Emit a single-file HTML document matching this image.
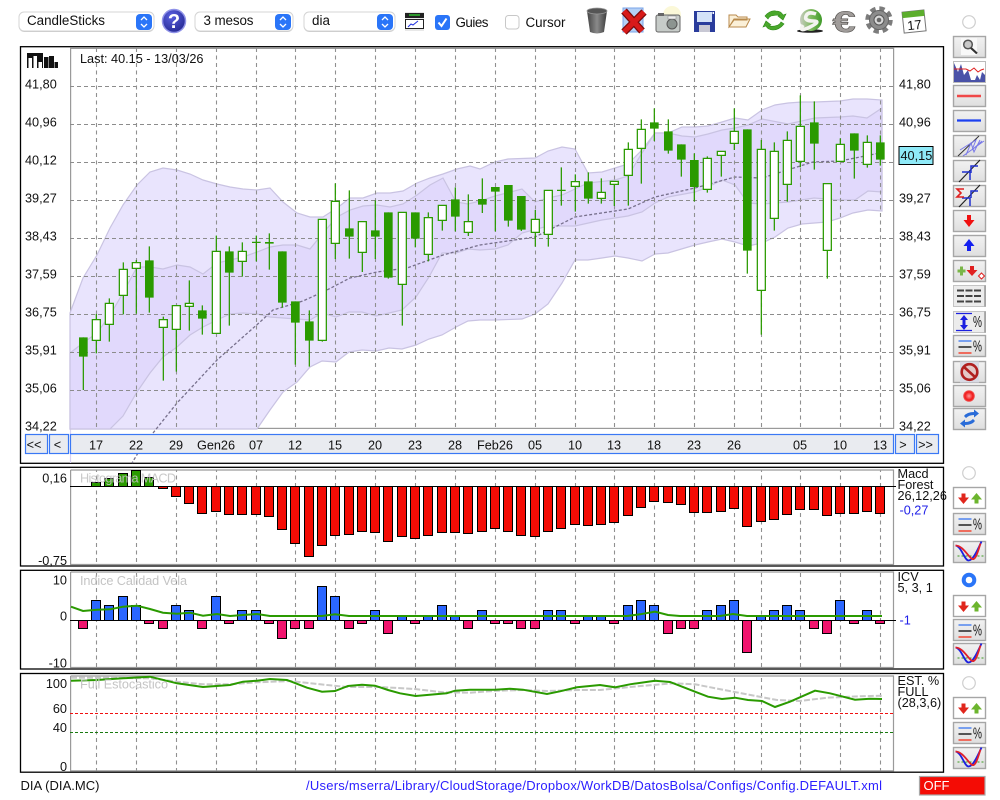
<!DOCTYPE html>
<html><head><meta charset="utf-8"><title>CandleSticks</title>
<style>
html,body{margin:0;padding:0;background:#fff;width:1000px;height:800px;overflow:hidden}
svg{display:block;filter:blur(.3px)}
text{font-family:"Liberation Sans",sans-serif;font-size:12.7px;fill:#111}
.wm{fill:#c4c4c4;font-size:12.7px}
.fr{fill:none;stroke:#000;stroke-width:1.3}
.in{fill:#fff;stroke:#9a9a9a;stroke-width:1.2}
.b{fill:url(#bg);stroke:#a6a6a6;stroke-width:1.4}
.sel{fill:#fff;stroke:#d4d4d4;stroke-width:1}
.sh{fill:#c8c8c8}
.st{fill:#2a75f8}
.nb{fill:#e9ebf0;stroke:#3a78f5;stroke-width:1.2}
</style></head><body>
<svg width="1000" height="800" viewBox="0 0 1000 800" xmlns="http://www.w3.org/2000/svg">
<defs>
<linearGradient id="bg" x1="0" y1="0" x2="0" y2="1"><stop offset="0" stop-color="#f2f2f2"/><stop offset="1" stop-color="#dedede"/></linearGradient>
<linearGradient id="tr" x1="0" y1="0" x2="1" y2="0"><stop offset="0" stop-color="#444"/><stop offset=".5" stop-color="#8a8a8a"/><stop offset="1" stop-color="#3c3c3c"/></linearGradient>
<radialGradient id="hp" cx=".4" cy=".3" r=".8"><stop offset="0" stop-color="#5a60e0"/><stop offset="1" stop-color="#20248c"/></radialGradient>
<radialGradient id="rd" cx=".5" cy=".5" r=".5"><stop offset="0" stop-color="#ff9a9a"/><stop offset=".7" stop-color="#f01818"/><stop offset="1" stop-color="#f06060"/></radialGradient>
<linearGradient id="cn" x1="0" y1="0" x2="1" y2="0"><stop offset="0" stop-color="#c8ccc0"/><stop offset=".55" stop-color="#7ab85a"/><stop offset="1" stop-color="#3f9a28"/></linearGradient>
<clipPath id="pn"><rect x="70" y="48" width="824" height="381"/><rect x="70" y="470" width="824" height="95"/><rect x="70" y="572" width="824" height="95"/><rect x="70" y="676" width="824" height="95"/></clipPath>
<g id="rg"><path d="M8 6h4v4h3.500l-5.500 6.500-5.500-6.500h3.500z" fill="#e0261c"/><path d="M21 16h4v-4h3.500l-5.500-6.500-5.500 6.500h3.500z" fill="#6cb52e"/></g>
<g id="pct"><path d="M5 5.500h13" stroke="#2a6cf0" stroke-width="1.200"/><path d="M5 11.500h13" stroke="#222" stroke-width="1.500"/><path d="M5 17.500h13" stroke="#f0604f" stroke-width="1.800"/><text transform="translate(19.500 16) scale(.72 1.1)" style="font-size:14px">%</text></g>
<g id="crv"><path d="M4 14.500h26" stroke="#3a9a20" stroke-width="1" stroke-dasharray="2 2" fill="none"/><path d="M2 4C8 5 11 19 15 19S23 11 28 0" stroke="#1c20e0" stroke-width="1.800" fill="none"/><path d="M2 4C9 4 14 14 18 17S24 11 27 2" stroke="#e0202a" stroke-width="1.800" fill="none"/></g>
</defs>

<!-- toolbar -->
<rect class="sh" x="19" y="13" width="135" height="19" rx="5"/><rect class="sel" x="19" y="12" width="135" height="19" rx="5"/><rect class="st" x="136" y="14" width="16" height="16" rx="4"/>
<path d="M141 20l3-3 3 3M141 24l3 3 3-3" stroke="#fff" stroke-width="1.300" fill="none"/>
<text x="27" y="25" style="font-size:13.400px" textLength="78">CandleSticks</text>
<circle cx="174" cy="21" r="11.500" fill="url(#hp)" stroke="#8f92e8" stroke-width="1.500"/>
<text x="174" y="28" text-anchor="middle" style="font-size:20px;font-weight:bold;fill:#fff">?</text>
<rect class="sh" x="195" y="13" width="98" height="19" rx="5"/><rect class="sel" x="195" y="12" width="98" height="19" rx="5"/><rect class="st" x="275" y="14" width="16" height="16" rx="4"/>
<path d="M280 20l3-3 3 3M280 24l3 3 3-3" stroke="#fff" stroke-width="1.300" fill="none"/>
<text x="203.500" y="25" style="font-size:13.400px" textLength="50">3 mesos</text>
<rect class="sh" x="304" y="13" width="91" height="19" rx="5"/><rect class="sel" x="304" y="12" width="91" height="19" rx="5"/><rect class="st" x="377" y="14" width="16" height="16" rx="4"/>
<path d="M382 20l3-3 3 3M382 24l3 3 3-3" stroke="#fff" stroke-width="1.300" fill="none"/>
<text x="312" y="25" style="font-size:13.400px" textLength="18">dia</text>
<rect x="405" y="12" width="19" height="19" fill="#e8e8e8"/><rect x="405" y="13" width="19" height="5" fill="#222"/><path d="M409 15h11" stroke="#30c030" stroke-width="1.500"/>
<rect x="405.500" y="19.500" width="18" height="9" fill="#fff" stroke="#222"/><path d="M408 27l3-3 2 1 5-4" stroke="#2030e0" fill="none"/>
<rect x="435" y="15" width="15" height="15" rx="3" fill="#2a75f8"/><path d="M438.500 22.500l3 3.500 5-7.500" stroke="#fff" stroke-width="2" fill="none"/>
<text x="455.500" y="27" style="font-size:13.400px" textLength="33">Guies</text>
<rect x="505.500" y="15.500" width="13.500" height="13.500" rx="3" fill="#fff" stroke="#c8c8c8"/>
<text x="525.500" y="27" style="font-size:13.400px" textLength="40">Cursor</text>

<!-- trash -->
<path d="M587 11L607 11 604 32Q597 35 590 32z" fill="url(#tr)"/><ellipse cx="597" cy="11" rx="10" ry="3" fill="#555" stroke="#999" stroke-width=".8"/>
<!-- X -->
<rect x="623" y="8" width="20" height="24" fill="#b4d0f6" stroke="#7aa4e8"/>
<path d="M624 11l18 20M644 12l-20 20" stroke="#7a0a0a" stroke-width="7.500" fill="none"/><path d="M624 11l18 20M644 12l-20 20" stroke="#d81a1a" stroke-width="5" fill="none"/>
<!-- camera -->
<circle cx="672" cy="15" r="9" fill="#fbf8d8"/><rect x="656" y="15" width="24" height="17" rx="2" fill="#c6cbc8" stroke="#666"/><rect x="658" y="13" width="6" height="3" fill="#666"/><circle cx="672" cy="24" r="5" fill="#8c9490" stroke="#555"/><rect x="668" y="16" width="8" height="3" fill="#eee" stroke="#888" stroke-width=".5"/>
<!-- floppy -->
<rect x="694" y="11" width="21" height="21" fill="#2a3c9c"/><rect x="697" y="12" width="15" height="10" fill="#d4e2f8"/><rect x="699" y="25" width="11" height="7" fill="#c8c8d4"/><rect x="712.500" y="12" width="1.500" height="2" fill="#fff"/>
<!-- folder -->
<path d="M729 27V15h7l2 2h9v3H734l-5 7zM729 27h17l4-8h-16z" fill="#fbf0d8" stroke="#b88a4c" stroke-width="1"/>
<!-- refresh -->
<path d="M765 16Q770 10 776 11 781 11 783 15l3-1-3 6-5-4 2-1Q776 15 771 16 769 17 768 19z" fill="#4aa82c" stroke="#2e8a18" stroke-width=".6"/>
<path d="M784 24Q779 30 773 30 768 30 766 26l-3 1 3-6 5 4-2 1Q773 27 778 25 780 24 781 22z" fill="#4aa82c" stroke="#2e8a18" stroke-width=".6"/>
<!-- coin -->
<ellipse cx="810" cy="31" rx="13" ry="1.800" fill="#222"/><circle cx="811" cy="20" r="11" fill="url(#cn)"/>
<path d="M816 14Q808 11 806 16T813 21 810 27 803 25" fill="none" stroke="#f4f4f0" stroke-width="3.600"/>
<!-- euro -->
<text transform="translate(844 32) scale(1.400 1)" text-anchor="middle" style="font-size:30px;font-weight:bold;fill:#a09c9a;stroke:#55524f;stroke-width:.6">€</text>
<!-- gear -->
<circle cx="879" cy="20" r="11" fill="none" stroke="#7c7c7c" stroke-width="5.500" stroke-dasharray="5 3.640"/><circle cx="879" cy="20" r="9.500" fill="#8c8c8c" stroke="#666"/><circle cx="879" cy="20" r="5" fill="#d8d8d8" stroke="#555"/><circle cx="879" cy="20" r="2.300" fill="#666"/>
<!-- calendar -->
<g transform="rotate(-6 914 21)"><rect x="903" y="11" width="22" height="21" fill="#fff" stroke="#777"/><rect x="903" y="11" width="22" height="6" fill="#5cae2c"/><text x="914" y="29.500" text-anchor="middle" style="font-size:13px">17</text></g>

<circle cx="969" cy="22" r="6.300" fill="#fff" stroke="#cfcfcf" stroke-width="1.200"/>

<!-- main panel -->
<rect class="fr" x="20.500" y="46.700" width="923" height="416.600"/>
<rect class="in" x="70.600" y="48.400" width="823" height="380"/>
<path d="M70.500 429V463" stroke="#d8d2f2" stroke-width="1.200"/>
<path d="M70 313L83 278 97 255 110 228 123 205 137 185 150 172 163 168 177 170 190 174 203 180 217 184 230 187 243 189 257 190 270 188 283 202 297 213 310 217 323 217 337 208 350 198 363 198 377 193 390 193 403 191 417 183 430 178 443 174 457 169 470 166 480 169 495 162 508 159 535 158 548 151 562 147 575 149 588 173 602 172 615 168 628 164 642 150 655 133 668 133 682 127 695 127 708 126 722 122 735 118 748 120 762 110 775 105 788 103 802 102 815 102 840 101 853 99 867 99 882 100V211L868 210 853 213 840 218 827 222 802 224 788 228 775 237 762 243 748 246 735 242 722 239 708 242 695 245 668 253 655 254 642 261 628 258 615 256 602 258 588 260 575 260 562 283 548 304 535 314 522 319 495 320 480 320 468 321 456 327 442 335 429 339 416 345 402 349 389 348 376 351 362 350 349 352 336 362 322 361 310 367 297 382 283 392 270 410 257 429H70z" fill="#e9e4fd" stroke="#c9c3e2" stroke-width="1.200"/>
<path d="M70 353L83 343 97 333 110 315 123 293 137 267 150 267 163 269 177 265 190 267 203 274 217 263 230 260 243 257 257 252 270 247 283 245 297 245 310 249 323 233 337 217 350 210 363 206 377 205 390 207 403 204 417 195 430 185 443 178 456 202 468 204 480 201 495 196 522 189 535 202 548 198 562 195 575 189 588 183 615 180 628 176 642 153 655 133 668 133 682 136 695 137 708 134 722 130 735 128 748 125 762 119 788 124 815 118 840 117 853 116 867 118 882 108V192L868 191 855 200 840 200 814 198 788 202 775 203 762 204 748 203 735 185 722 180 708 187 695 192 668 197 655 203 642 212 628 216 602 220 575 226 562 226 548 226 522 233 508 245 495 249 480 250 468 249 456 253 442 253 429 277 416 297 402 310 389 313 376 316 362 312 349 312 336 317 322 313 310 320 297 319 283 318 270 317 257 314 243 313 230 314 217 320 203 327 190 335 177 347 163 357 150 373 137 392 123 416 110 429H70z" fill="#e1d9fc" stroke="#c9c3e2" stroke-width="1.200"/>
<path d="M70 86.500H896M70 124.500H896M70 162.500H896M70 200.500H896M70 238.500H896M70 276.500H896M70 314.500H896M70 352.500H896M70 390.500H896" stroke="#8c8c8c" stroke-width="1.100" stroke-dasharray="4 3" fill="none"/>
<path d="M153 433L177 403 217 360 260 322 273 310 303 301 327 290 350 278 377 272 407 268 443 255 480 245 535 237 575 217 628 209 655 197 695 188 735 177 762 178 813 162 840 161 880 153M138 453L132 463" fill="none" stroke="#77708c" stroke-width="1.300" stroke-dasharray="3 2"/>

<!-- vertical grid -->
<path clip-path="url(#pn)" d="M96.500 48V771M136.500 48V771M176.500 48V771M216.500 48V771M256.500 48V771M295.500 48V771M335.500 48V771M375.500 48V771M415.500 48V771M455.500 48V771M495.500 48V771M535.500 48V771M575.500 48V771M614.500 48V771M654.500 48V771M694.500 48V771M734.500 48V771M761.500 48V771M800.500 48V771M840.500 48V771M880.500 48V771" stroke="#909090" stroke-width="1.100" stroke-dasharray="4 3.500" fill="none"/>

<!-- candles A -->
<g transform="translate(60 130) scale(.33333)">
<path d="M70 622V780M109 552V670M148 505V635M190 397V553M229 390V551M268 349V548M310 560V752M349 527V725M388 451V602M427 526V614M469 317V612M508 349V587M547 337V440M589 317V394M628 310V419M667 364V533M706 514V704M748 541V710M787 268V635M826 160V387M868 181V386M907 275V426M946 211V387M985 247V446M1027 247V587M1066 247V352M1105 247V394M1147 226V302M1186 172V304M1225 193V318M576 337h26" stroke="#2a9a00" stroke-width="3.800" fill="none"/>
<path d="M57 622h26v58h-26zM255 391h26v112h-26zM414 541h26v25h-26zM495 364h26v64h-26zM615 336h26v5h-26zM654 364h26v154h-26zM693 514h26v64h-26zM735 574h26v58h-26zM855 295h26v25h-26zM933 301h26v19h-26zM972 247h26v196h-26zM1053 247h26v79h-26zM1173 208h26v52h-26z" fill="#2a9a00"/>
<path d="M97 569h24v62h-24zM136 520h24v63h-24zM178 418h24v78h-24zM217 398h24v17h-24zM298 569h24v23h-24zM337 527h24v71h-24zM376 520h24v9h-24zM457 364h24v246h-24zM535 364h24v30h-24zM775 268h24v363h-24zM814 214h24v126h-24zM895 275h24v92h-24zM1015 247h24v216h-24zM1093 263h24v110h-24zM1135 226h24v45h-24zM1213 275h24v32h-24z" fill="#fff" stroke="#2a9a00" stroke-width="3.800"/>
</g>
<!-- candles B -->
<g transform="translate(480 90) scale(.33333)">
<path d="M7 265V369M46 291V424M85 285V410M124 318V423M166 360V470M205 301V470M244 232V347M286 253V365M325 247V341M364 265V341M403 274V348M445 157V347M484 88V281M523 55V153M565 88V191M604 163V260M643 190V334M682 199V308M724 184V260M763 55V180M802 118V551M844 150V734M883 157V422M922 124V335M961 16V232M1003 34V239M1042 281V566M1081 145V215M1123 130V266M1162 136V233M1201 136V227M231 301h26" stroke="#2a9a00" stroke-width="3.800" fill="none"/>
<path d="M-6 327h26v17h-26zM33 291h26v14h-26zM72 285h26v107h-26zM111 318h26v101h-26zM312 274h26v52h-26zM510 97h26v19h-26zM552 124h26v58h-26zM591 163h26v46h-26zM630 210h26v81h-26zM789 118h26v364h-26zM990 97h26v64h-26zM1110 130h26v52h-26zM1188 157h26v52h-26z" fill="#2a9a00"/>
<path d="M154 388h24v39h-24zM193 301h24v132h-24zM274 275h24v14h-24zM352 307h24v18h-24zM391 274h24v9h-24zM433 178h24v78h-24zM472 118h24v57h-24zM670 205h24v93h-24zM712 184h24v12h-24zM751 124h24v36h-24zM832 178h24v423h-24zM871 184h24v201h-24zM910 151h24v132h-24zM949 109h24v105h-24zM1030 281h24v200h-24zM1069 163h24v51h-24zM1150 157h24v66h-24z" fill="#fff" stroke="#2a9a00" stroke-width="3.800"/>
</g>

<!-- chart logo -->
<rect x="27" y="53" width="16" height="15" fill="#111"/><path d="M28.500 58h3.500v10h-3.500zM33.500 56h3.500v12h-3.500zM38.500 62h3.500v6h-3.500z" fill="#fff"/><path d="M44 57h4.500v11h-4.500zM49 56h5v12h-5zM54.500 62h3.500v6h-3.500z" fill="#111"/>
<text x="80" y="63">Last: 40.15 - 13/03/26</text>
<g>
<text x="25" y="88.500">41,80</text><text x="25" y="126.500">40,96</text><text x="25" y="164.500">40,12</text><text x="25" y="202.500">39,27</text><text x="25" y="240.500">38,43</text><text x="25" y="278.500">37,59</text><text x="25" y="316.500">36,75</text><text x="25" y="354.500">35,91</text><text x="25" y="392.500">35,06</text><text x="25" y="430.500">34,22</text>
<text x="899" y="88.500">41,80</text><text x="899" y="126.500">40,96</text><text x="899" y="202.500">39,27</text><text x="899" y="240.500">38,43</text><text x="899" y="278.500">37,59</text><text x="899" y="316.500">36,75</text><text x="899" y="354.500">35,91</text><text x="899" y="392.500">35,06</text><text x="899" y="430.500">34,22</text>
</g>
<rect x="899" y="146.500" width="34" height="18" fill="#8feaf8" stroke="#000"/>
<text x="900.500" y="160">40,15</text>

<!-- nav -->
<rect class="nb" x="25.500" y="434.500" width="22" height="19"/><text x="34" y="449" text-anchor="middle">&lt;&lt;</text>
<rect class="nb" x="49.500" y="434.500" width="19" height="19"/><text x="57.500" y="449" text-anchor="middle">&lt;</text>
<rect class="nb" x="70.500" y="434.500" width="823" height="19"/>
<rect class="nb" x="895.500" y="434.500" width="19" height="19"/><text x="903" y="449" text-anchor="middle">&gt;</text>
<rect class="nb" x="916.500" y="434.500" width="22" height="19"/><text x="925.500" y="449" text-anchor="middle">&gt;&gt;</text>
<g text-anchor="middle">
<text x="96" y="449.500">17</text><text x="136" y="449.500">22</text><text x="176" y="449.500">29</text><text x="216" y="449.500">Gen26</text><text x="256" y="449.500">07</text><text x="295" y="449.500">12</text><text x="335" y="449.500">15</text><text x="375" y="449.500">20</text><text x="415" y="449.500">23</text><text x="455" y="449.500">28</text><text x="495" y="449.500">Feb26</text><text x="535" y="449.500">05</text><text x="575" y="449.500">10</text><text x="614" y="449.500">13</text><text x="654" y="449.500">18</text><text x="694" y="449.500">23</text><text x="734" y="449.500">26</text><text x="800" y="449.500">05</text><text x="840" y="449.500">10</text><text x="880" y="449.500">13</text>
</g>

<!-- MACD -->
<rect class="fr" x="20.500" y="467.300" width="923" height="98.700"/>
<path d="M70.600 470V564.500H893.500V470H70.600" fill="none" stroke="#9a9a9a" stroke-width="1.200"/>
<path d="M91.500 486.500V482.500h9v4zM104.500 486.500V478.500h9v8zM118.500 486.500V473.500h9v13zM131.500 486.500V470.500h9v16zM144.500 486.500V477.500h9v9z" fill="#2a9a00" stroke="#000"/>
<path d="M158.500 486.500h9V488.500h-9zM171.500 486.500h9V496.500h-9zM184.500 486.500h9V503.500h-9zM197.500 486.500h9V513.500h-9zM211.500 486.500h9V511.500h-9zM224.500 486.500h9V514.500h-9zM237.500 486.500h9V514.500h-9zM251.500 486.500h9V514.500h-9zM264.500 486.500h9V516.500h-9zM277.500 486.500h9V529.500h-9zM290.500 486.500h9V543.500h-9zM304.500 486.500h9V556.500h-9zM317.500 486.500h9V545.500h-9zM330.500 486.500h9V535.500h-9zM344.500 486.500h9V534.500h-9zM357.500 486.500h9V531.500h-9zM370.500 486.500h9V532.500h-9zM383.500 486.500h9V541.500h-9zM397.500 486.500h9V536.500h-9zM410.500 486.500h9V538.500h-9zM423.500 486.500h9V535.500h-9zM437.500 486.500h9V532.500h-9zM450.500 486.500h9V532.500h-9zM463.500 486.500h9V533.500h-9zM477.500 486.500h9V531.500h-9zM490.500 486.500h9V528.500h-9zM503.500 486.500h9V531.500h-9zM516.500 486.500h9V535.500h-9zM530.500 486.500h9V536.500h-9zM543.500 486.500h9V531.500h-9zM556.500 486.500h9V528.500h-9zM570.500 486.500h9V524.500h-9zM583.500 486.500h9V525.500h-9zM596.500 486.500h9V524.500h-9zM609.500 486.500h9V522.500h-9zM623.500 486.500h9V515.500h-9zM636.500 486.500h9V507.500h-9zM649.500 486.500h9V501.500h-9zM663.500 486.500h9V502.500h-9zM676.500 486.500h9V504.500h-9zM689.500 486.500h9V512.500h-9zM702.500 486.500h9V512.500h-9zM716.500 486.500h9V511.500h-9zM729.500 486.500h9V508.500h-9zM742.500 486.500h9V526.500h-9zM756.500 486.500h9V521.500h-9zM769.500 486.500h9V519.500h-9zM782.500 486.500h9V514.500h-9zM795.500 486.500h9V509.500h-9zM809.500 486.500h9V509.500h-9zM822.500 486.500h9V515.500h-9zM835.500 486.500h9V513.500h-9zM849.500 486.500h9V513.500h-9zM862.500 486.500h9V511.500h-9zM875.500 486.500h9V513.500h-9z" fill="#f40c05" stroke="#000"/>
<path d="M70 486.500H896" stroke="#000"/>
<text class="wm" x="80" y="482.500" textLength="96" opacity=".9">Histograma MACD</text>
<text x="67" y="482.500" text-anchor="end">0,16</text><text x="67" y="565" text-anchor="end">-0,75</text>
<text x="897.500" y="478">Macd</text><text x="897.500" y="489">Forest</text><text x="897.500" y="500">26,12,26</text><text x="899.500" y="514.500" style="fill:#2020e8">-0,27</text>

<!-- ICV -->
<rect class="fr" x="20.500" y="570.300" width="923" height="98.700"/>
<path d="M70.600 572V667.500H893.500V572H70.600" fill="none" stroke="#9a9a9a" stroke-width="1.200"/>
<path d="M91.500 620.500V600.500h9v20zM104.500 620.500V605.500h9v15zM118.500 620.500V596.500h9v24zM131.500 620.500V605.500h9v15zM171.500 620.500V605.500h9v15zM184.500 620.500V610.500h9v10zM211.500 620.500V596.500h9v24zM237.500 620.500V610.500h9v10zM251.500 620.500V610.500h9v10zM317.500 620.500V586.500h9v34zM330.500 620.500V596.500h9v24zM370.500 620.500V610.500h9v10zM397.500 620.500V615.500h9v5zM423.500 620.500V615.500h9v5zM437.500 620.500V605.500h9v15zM450.500 620.500V615.500h9v5zM477.500 620.500V610.500h9v10zM543.500 620.500V610.500h9v10zM556.500 620.500V610.500h9v10zM583.500 620.500V615.500h9v5zM596.500 620.500V615.500h9v5zM623.500 620.500V605.500h9v15zM636.500 620.500V600.500h9v20zM649.500 620.500V605.500h9v15zM702.500 620.500V610.500h9v10zM716.500 620.500V605.500h9v15zM729.500 620.500V600.500h9v20zM756.500 620.500V615.500h9v5zM769.500 620.500V610.500h9v10zM782.500 620.500V605.500h9v15zM795.500 620.500V610.500h9v10zM835.500 620.500V600.500h9v20zM862.500 620.500V610.500h9v10z" fill="#2b66ff" stroke="#000"/>
<path d="M78.500 620.500V628.500h9v-8zM144.500 620.500V623.500h9v-3zM158.500 620.500V628.500h9v-8zM197.500 620.500V628.500h9v-8zM224.500 620.500V623.500h9v-3zM264.500 620.500V623.500h9v-3zM277.500 620.500V638.500h9v-18zM290.500 620.500V628.500h9v-8zM304.500 620.500V628.500h9v-8zM344.500 620.500V628.500h9v-8zM357.500 620.500V623.500h9v-3zM383.500 620.500V633.500h9v-13zM410.500 620.500V623.500h9v-3zM463.500 620.500V628.500h9v-8zM490.500 620.500V623.500h9v-3zM503.500 620.500V623.500h9v-3zM516.500 620.500V628.500h9v-8zM530.500 620.500V628.500h9v-8zM570.500 620.500V623.500h9v-3zM609.500 620.500V623.500h9v-3zM663.500 620.500V633.500h9v-13zM676.500 620.500V628.500h9v-8zM689.500 620.500V628.500h9v-8zM742.500 620.500V652.500h9v-32zM809.500 620.500V628.500h9v-8zM822.500 620.500V633.500h9v-13zM849.500 620.500V623.500h9v-3zM875.500 620.500V623.500h9v-3z" fill="#f0146e" stroke="#000"/>
<path d="M70 620.500H896" stroke="#000"/>
<path d="M71 606.700L83 611 97 609.700 110 609.300 123 606.700 137 605.700 150 609 163 612.700 177 613.700 190 612.700 203 615.700 217 614 230 616 243 615 257 614 270 616H322L335 614.300 349 616H627L640 614.300 655 611.700 668 615 680 616H720L733 614 747 616H882" fill="none" stroke="#2a9a00" stroke-width="2"/>
<text class="wm" x="80" y="585" textLength="107">Indice Calidad Vela</text>
<text x="67" y="584.500" text-anchor="end">10</text><text x="67" y="620.500" text-anchor="end">0</text><text x="67" y="667.500" text-anchor="end">-10</text>
<text x="897.500" y="581">ICV</text><text x="897.500" y="592">5, 3, 1</text><text x="899.500" y="624.500" style="fill:#2020e8">-1</text>

<!-- EST -->
<rect class="fr" x="20.500" y="673.500" width="923" height="98.700"/>
<path d="M70.600 676V770.800H893.500V676H70.600" fill="none" stroke="#9a9a9a" stroke-width="1.200"/>
<path d="M70 713.500H895" stroke="#f01010" stroke-dasharray="3 2"/><path d="M70 732.500H895" stroke="#1a7a10" stroke-dasharray="3 2"/>
<path d="M71 677.700L107 677.700 150 678.300 177 681.700 203 684.300 230 684.300 257 682.300 290 681 320 684.300 347 687 380 687 415 689 443 692.300 470 692.700 497 690.700 523 690 547 691 580 690 600 690 633 686.700 673 683.300 695 684.300 733 691.700 777 700 800 701 827 697.700 860 696.300 882 695.700" fill="none" stroke="#c8c8c8" stroke-width="2" stroke-dasharray="6 2"/>
<path d="M71 680.700L97 680 123 678.300 150 676.700 177 683.300 203 687 230 685 243 681.700 257 680.700 270 679 287 680 307 687.700 322 691.700 335 691 348 686 362 684.700 375 685.700 388 690 400 693.300 415.700 696 446.700 693.300 455 690.700 470 689.700 495 689.700 510 688.700 523 689.700 547 694 560 691.300 577 687.300 600 685 615 687.300 630 684.300 655 680.700 670 682 695 691.700 708 696.700 722 699 735 697.700 748 700 762 701 775 707 790 701.700 815 690.700 830 693.300 855 699.700 870 698.700 882 699" fill="none" stroke="#2a9a00" stroke-width="2"/>
<text class="wm" x="80" y="688.500" textLength="88">Full Estocastico</text>
<text x="67" y="688" text-anchor="end">100</text><text x="67" y="713" text-anchor="end">60</text><text x="67" y="732" text-anchor="end">40</text><text x="67" y="771" text-anchor="end">0</text>
<text x="897.500" y="685">EST. %</text><text x="897.500" y="696">FULL</text><text x="897.500" y="707">(28,3,6)</text>

<!-- footer -->
<text x="20.500" y="790" style="font-size:13px" textLength="79">DIA (DIA.MC)</text>
<text x="306" y="790" style="font-size:13px;fill:#2a1eff" textLength="576">/Users/mserra/Library/CloudStorage/Dropbox/WorkDB/DatosBolsa/Configs/Config.DEFAULT.xml</text>
<rect x="919.500" y="776.500" width="65.500" height="18.500" fill="#f40c05" stroke="#a8a8a8" stroke-width="1.200"/>
<text x="923.500" y="790" style="font-size:13px;fill:#fff">OFF</text>

<!-- right buttons -->
<rect class="b" x="953.500" y="36.500" width="32" height="21"/>
<rect x="961" y="38" width="16" height="17" fill="#f8f8f8"/><circle cx="968" cy="44.500" r="4.300" fill="#c8c8c8" stroke="#555" stroke-width="1.500"/><path d="M971 48l6 5.500" stroke="#333" stroke-width="2.200"/>

<rect x="953.500" y="61.500" width="32" height="21" fill="#fff" stroke="#bbb"/>
<path d="M954 82V63L958 72 961 64 964 75 968 70 971 80 975 80 977 75 980 80 982 72 985 75V82z" fill="#4a52a8"/>
<path d="M954 69H966L970 71 974 68 978 72 981 70 984 69" fill="none" stroke="#e02020"/>

<rect class="b" x="953.500" y="85.500" width="32" height="21"/><path d="M957 96H981" stroke="#f04848" stroke-width="2.500"/>
<rect class="b" x="953.500" y="110.500" width="32" height="21"/><path d="M957 120.500H981" stroke="#1c40f0" stroke-width="2.200"/>

<rect class="b" x="953.500" y="135.500" width="32" height="21"/>
<path d="M958 156L979 136" stroke="#333" stroke-width="1"/><path d="M963 156L984 141M960 150L976 140 972 150 982 141M966 155L971 143 974 152 980 140" stroke="#7a7ae8" fill="none"/>

<rect class="b" x="953.500" y="160.500" width="32" height="21"/>
<path d="M959 182L980 160" stroke="#222" stroke-width="1.200"/><path d="M962 172h8v8M978 166h-7v7" stroke="#2030d0" stroke-width="1.500" fill="none"/>

<rect class="b" x="953.500" y="185.500" width="32" height="21"/>
<path d="M959 207L980 185" stroke="#222" stroke-width="1.200"/><path d="M962 198h8v8M978 191h-7v7" stroke="#2030d0" stroke-width="1.500" fill="none"/>
<path d="M964 189h-7l4 4-4 4h7" fill="none" stroke="#e02020" stroke-width="1.600"/>

<rect class="b" x="953.500" y="210.500" width="32" height="21"/><path d="M967 215h4v5h3.500l-5.500 7-5.500-7h3.500z" fill="#f01010"/>
<rect class="b" x="953.500" y="235.500" width="32" height="21"/><path d="M967 251h4v-5h3.500l-5.500-7-5.500 7h3.500z" fill="#1420f0"/>

<rect class="b" x="953.500" y="260.500" width="32" height="21"/>
<path d="M961.500 266.500v9M957.500 271h8" stroke="#7ab648" stroke-width="3"/><path d="M970 266h4v4h3.500l-5.500 6-5.500-6h3.500z" fill="#e02020"/><path d="M981.500 273l3 3-3 3-3-3z" fill="#fff" stroke="#e02020"/>

<rect x="953.500" y="285.500" width="32" height="21" fill="#ececec" stroke="#c4c4c4"/><path d="M985 285.500v21" stroke="#999" stroke-width="1.500"/>
<path d="M957 290.500H981M957 296H981M957 301.500H981" stroke="#444" stroke-width="2" stroke-dasharray="7 1.500"/>

<rect x="953.500" y="311.500" width="32" height="21" fill="#ececec" stroke="#c4c4c4"/><path d="M985 311.500v21" stroke="#999" stroke-width="1.500"/>
<path d="M956 313.500H972M956 330.500H972" stroke="#1c20e0" stroke-width="1.200"/><path d="M964 315l4 5h-2.500v5H968l-4 5-4-5h2.500v-5H960z" fill="#1c20e0"/><text transform="translate(973 327) scale(.72 1.100)" style="font-size:14px">%</text>

<rect class="b" x="953.500" y="335.500" width="32" height="21"/><use href="#pct" transform="translate(953.500 335.500)"/>

<rect class="b" x="953.500" y="361.500" width="32" height="21"/>
<rect x="960" y="361.500" width="19" height="21" fill="#d8dae4"/><circle cx="969.500" cy="372" r="7.800" fill="#e4c8c8" stroke="#b02020" stroke-width="2.600"/><path d="M964 367l11 10" stroke="#b02020" stroke-width="2.600"/>

<rect class="b" x="953.500" y="385.500" width="32" height="21"/><circle cx="969" cy="396" r="5.800" fill="url(#rd)"/>

<rect class="b" x="953.500" y="408.500" width="32" height="21"/>
<path d="M964 416Q967 412 974 412v-2.500l5 4-5 4V415Q969 415 966 418z" fill="#2a6cd8"/><path d="M975 421Q972 425 965 425v2.500l-5-4 5-4V422Q970 422 973 419z" fill="#2a6cd8"/>

<circle cx="969" cy="473" r="6.300" fill="#fff" stroke="#cfcfcf" stroke-width="1.200"/>
<rect x="953.500" y="487.500" width="32" height="21" fill="#fff" stroke="#a6a6a6" stroke-width="1.400"/><use href="#rg" transform="translate(953.500 487.500)"/>
<rect class="b" x="953.500" y="513.500" width="32" height="21"/><use href="#pct" transform="translate(953.500 513.500)"/>
<rect class="b" x="953.500" y="541.500" width="32" height="21"/><use href="#crv" transform="translate(953.500 541.500)"/>

<circle cx="969" cy="580" r="5.300" fill="#fff" stroke="#2a75f8" stroke-width="4"/>
<rect x="953.500" y="595.500" width="32" height="21" fill="#fff" stroke="#a6a6a6" stroke-width="1.400"/><use href="#rg" transform="translate(953.500 595.500)"/>
<rect class="b" x="953.500" y="619.500" width="32" height="21"/><use href="#pct" transform="translate(953.500 619.500)"/>
<rect class="b" x="953.500" y="643.500" width="32" height="21"/><use href="#crv" transform="translate(953.500 643.500)"/>

<circle cx="969" cy="683" r="6.300" fill="#fff" stroke="#cfcfcf" stroke-width="1.200"/>
<rect x="953.500" y="697.500" width="32" height="21" fill="#fff" stroke="#a6a6a6" stroke-width="1.400"/><use href="#rg" transform="translate(953.500 697.500)"/>
<rect class="b" x="953.500" y="722.500" width="32" height="21"/><use href="#pct" transform="translate(953.500 722.500)"/>
<rect class="b" x="953.500" y="747.500" width="32" height="21"/><use href="#crv" transform="translate(953.500 747.500)"/>
</svg>
</body></html>
